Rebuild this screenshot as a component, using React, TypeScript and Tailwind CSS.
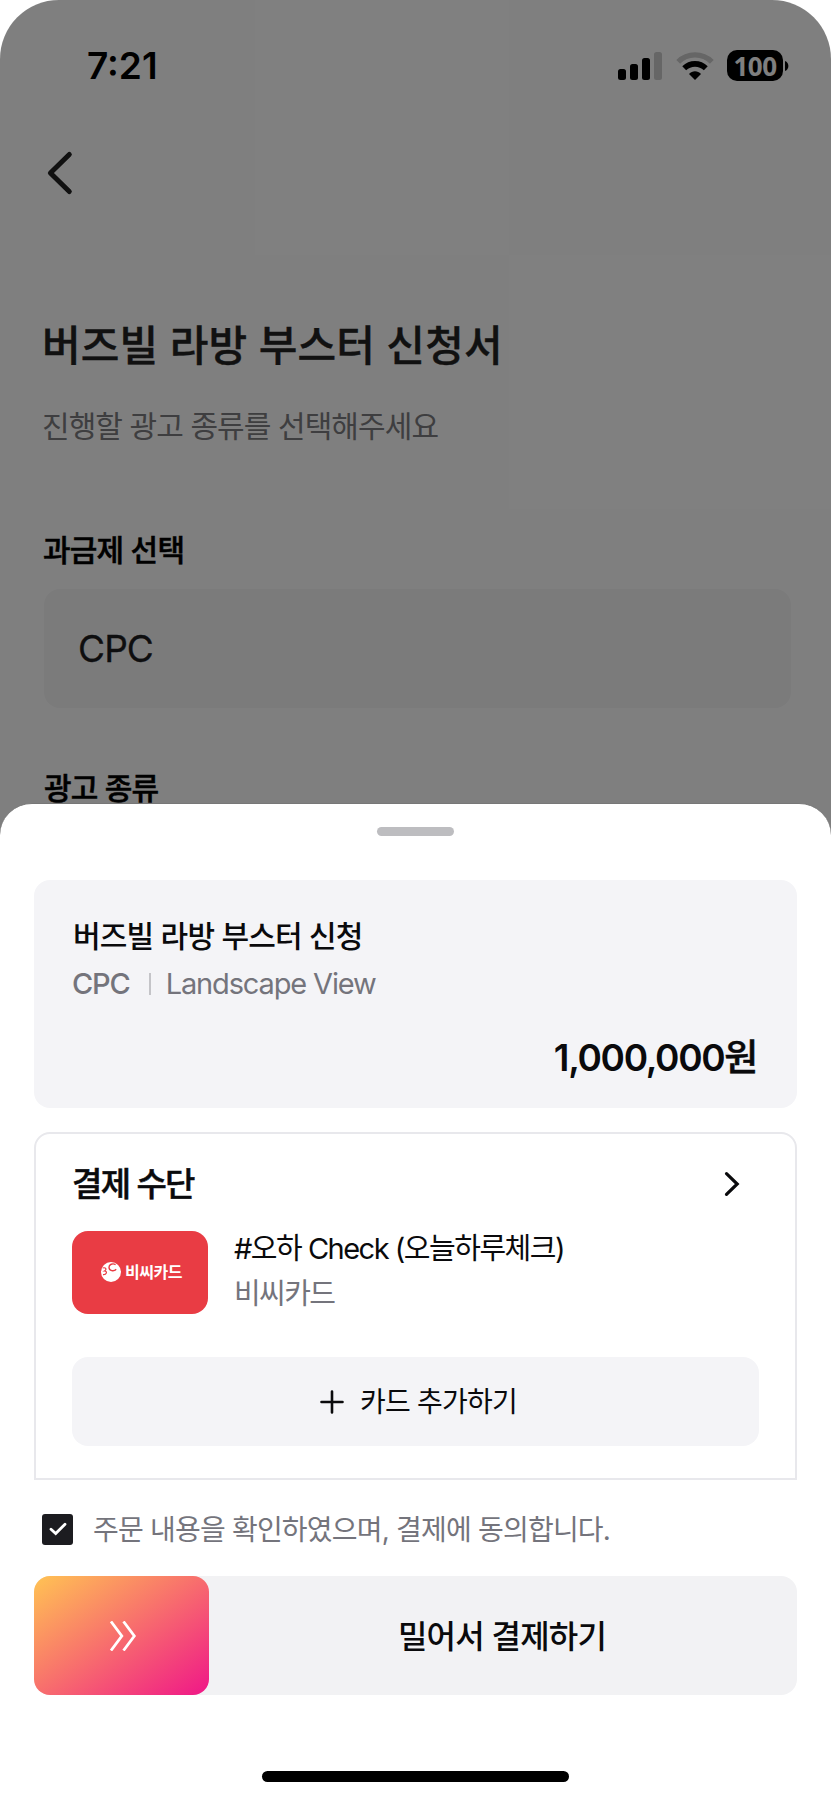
import { useState } from 'react'
import { clsx } from 'clsx'

const order = {
  title: '버즈빌 라방 부스터 신청',
  plan: 'CPC',
  type: 'Landscape View',
  price: 1000000,
}

function StatusBar() {
  return (
    <div className="flex h-[131px] items-center justify-between pl-[87px] pr-[42px]">
      <span className="text-[37px] leading-[40px] font-semibold tracking-[0px] text-black">7:21</span>
      <div className="flex items-center">
        {/* Signal */}
        <svg width="44" height="28" viewBox="0 0 44 28" className="mr-[14px]">
          <rect x="0" y="17" width="8" height="11" rx="2.5" />
          <rect x="12" y="12" width="8" height="16" rx="2.5" />
          <rect x="24" y="6" width="8" height="22" rx="2.5" />
          <rect x="36" y="0" width="8" height="28" rx="2.5" fill="#ccc" />
        </svg>
        {/* Wifi */}
        <svg width="38" height="28" viewBox="0 0 38 28" fill="none" className="mr-[13px]">
          <path d="M2.2 9.8C11.5 0.6 26.5 0.6 35.8 9.8" stroke="#ccc" strokeWidth="5.4" />
          <path d="M8.2 16.2C14.3 10.4 23.7 10.4 29.8 16.2" stroke="#000" strokeWidth="5.6" />
          <path d="M13 22C16.4 18.4 21.6 18.4 25 22L19 28Z" fill="#000" />
        </svg>
        {/* Battery */}
        <div className="flex h-[31px] w-[56px] items-center justify-center rounded-[10px] bg-black font-['Open_Sans',sans-serif] text-[26px] leading-none font-bold tracking-[-0.6px] text-white">
          100
        </div>
        <svg width="4" height="10" viewBox="0 0 4 10" className="ml-[2px]">
          <path d="M0 0C4.5 1.5 4.5 8.5 0 10Z" />
        </svg>
      </div>
    </div>
  )
}

function OrderForm() {
  return (
    <div className="h-[1000px] overflow-hidden rounded-t-[59px] bg-white">
      <StatusBar />
      <button className="ml-[45px] mt-[19px] block">
        <svg width="28" height="46" viewBox="0 0 28 46" fill="none" stroke="#222" strokeWidth="5" strokeLinecap="round" strokeLinejoin="round">
          <path d="M24.3 4.5L5.4 23L24.3 41.5" />
        </svg>
      </button>
      <div className="px-[42px]">
        <h1 className="mt-[124px] text-[42px] leading-[52px] font-medium tracking-[0.15px] text-[#222] [-webkit-text-stroke:0.4px]">
          버즈빌 라방 부스터 신청서
        </h1>
        <p className="mt-[34px] text-[30px] leading-[40px] tracking-[-0.92px] text-[#7c7c80]">
          진행할 광고 종류를 선택해주세요
        </p>
        <p className="mt-[84px] ml-px text-[30px] leading-[40px] font-medium tracking-[-0.8px] text-black [-webkit-text-stroke:0.5px]">
          과금제 선택
        </p>
        <div className="mt-[19px] ml-[2px] mr-[-2px] flex h-[119px] items-center rounded-[16px] bg-[#f6f6f7] pl-[34px] text-[37px] tracking-[-0.9px] text-[#1c1c1e] [-webkit-text-stroke:0.3px]">
          CPC
        </div>
        <p className="mt-[60px] ml-[2px] text-[30px] leading-[40px] font-medium tracking-[-0.8px] text-black [-webkit-text-stroke:0.5px]">
          광고 종류
        </p>
      </div>
    </div>
  )
}

function OrderSummary() {
  return (
    <section className="mt-[44px] h-[228px] rounded-[16px] bg-[#f4f4f7] pt-[36px] pl-[38px] pr-[40px]">
      <h2 className="ml-px text-[30px] leading-[40px] font-medium tracking-[-0.8px] text-[#0a0a0c]">{order.title}</h2>
      <div className="mt-[8px] flex h-[40px] items-center text-[29px] leading-[40px] tracking-[-1.15px] text-[#74747c]">
        <span className="font-medium">{order.plan}</span>
        <span className="ml-[19px] mr-[15px] h-[22px] w-[2px] bg-[#c4c4c8]" />
        <span>{order.type}</span>
      </div>
      <p className="mt-[32px] text-right text-[37px] leading-[44px] font-semibold tracking-[-1.35px] text-[#0a0a0c]">
        {order.price.toLocaleString('en-US')}
        <span className="font-medium [-webkit-text-stroke:0.5px]">원</span>
      </p>
    </section>
  )
}

function CardLogo() {
  return (
    <div className="mt-px flex h-[83px] w-[136px] items-center rounded-[16px] bg-[#e93c44] pb-px pl-[29px]">
      <svg width="20" height="20" viewBox="0 0 20 20" fill="none">
        <circle cx="10" cy="10" r="10" fill="#fff" />
        <path d="M15.2 7.2C13 9.8 8 9 8 5.2C8 2.6 11.5 0.8 14.6 2.6" stroke="#e93c44" strokeWidth="1.4" />
        <path d="M1.6 6C5 5 6 7.6 3.4 9C6.8 9.2 5.6 13 2 12.6" stroke="#e93c44" strokeWidth="1.2" />
      </svg>
      <span className="ml-[4px] text-[16px] leading-none font-bold tracking-[-0.5px] text-white">비씨카드</span>
    </div>
  )
}

function PaymentMethod() {
  return (
    <section className="mt-[24px] h-[348px] rounded-t-[16px] border-2 border-[#e8e8ec] pt-[28px] pl-[36px] pr-[36px]">
      <div className="flex items-center justify-between">
        <h2 className="text-[33px] leading-[44px] font-medium tracking-[-1.7px] text-[#0a0a0c] [-webkit-text-stroke:0.5px]">결제 수단</h2>
        <svg width="18" height="26" viewBox="0 0 18 26" fill="none" stroke="#0a0a0c" strokeWidth="3.2" strokeLinecap="round" className="mr-[18px]">
          <path d="M3.5 2.7L14.2 13L3.5 23.3" />
        </svg>
      </div>
      <div className="mt-[24px] flex">
        <CardLogo />
        <div className="ml-[26px]">
          <p className="mt-[-1px] text-[29px] leading-[40px] tracking-[-1.5px] text-[#0a0a0c]">#오하 Check (오늘하루체크)</p>
          <p className="mt-[5px] text-[29px] leading-[40px] tracking-[-1.6px] text-[#74747c]">비씨카드</p>
        </div>
      </div>
      <button className="mt-[43px] flex h-[89px] w-full items-center justify-center rounded-[16px] bg-[#f4f4f7] pt-px pl-[6px] text-[28px] tracking-[-0.8px] text-[#0a0a0c]">
        <svg width="24" height="24" viewBox="0 0 24 24" stroke="#0a0a0c" strokeWidth="2.6" strokeLinecap="round" className="mr-[16px]">
          <path d="M12 1.5V22.5M1.5 12H22.5" />
        </svg>
        카드 추가하기
      </button>
    </section>
  )
}

function PaymentSheet() {
  const [agreed, setAgreed] = useState(true)

  return (
    <div className="absolute inset-x-0 top-[803px] h-[997px] rounded-t-[32px] border-t border-[#777] bg-white px-[34px]">
      <div className="mx-auto mt-[23px] h-[9px] w-[77px] rounded-full bg-[#bdbdc0]" />
      <OrderSummary />
      <PaymentMethod />

      {/* Agreement */}
      <button onClick={() => setAgreed(!agreed)} className="mt-[29px] ml-[8px] flex h-[40px] items-center">
        <span className={clsx('flex size-[31px] items-center justify-center rounded-[3px]', agreed ? 'bg-[#1c1c20]' : 'bg-[#c4c4c8]')}>
          <svg width="18" height="14" viewBox="0 0 18 14" fill="none" stroke="#fff" strokeWidth="2.8" strokeLinecap="round">
            <path d="M2 7.2L6.7 11.6L16 2.2" />
          </svg>
        </span>
        <span className="mt-px ml-[20px] text-[28px] leading-[40px] tracking-[-0.8px] text-[#74747c]">
          주문 내용을 확인하였으며, 결제에 동의합니다.
        </span>
      </button>

      {/* Slide to pay */}
      <div className="mt-[27px] flex h-[119px] rounded-[16px] bg-[#f2f2f4]">
        <div className="flex w-[175px] items-center justify-center rounded-[16px] bg-[linear-gradient(145deg,#ffbe55_3%,#f01c86_97%)]">
          <svg width="28" height="30" viewBox="0 0 28 30" fill="none" stroke="#fff" strokeWidth="2.8" className="ml-[2px]">
            <path d="M2 0.5L12.8 15L2 29.5M14.5 0.5L25.3 15L14.5 29.5" />
          </svg>
        </div>
        <span className="flex flex-1 items-center justify-center pt-[2px] pr-[2px] text-[32px] font-medium tracking-[-0.8px] text-[#0a0a0c]">
          밀어서 결제하기
        </span>
      </div>

      <div className="mx-auto mt-[76px] h-[11px] w-[307px] rounded-full bg-black" />
    </div>
  )
}

export default function App() {
  return (
    <div className="relative h-[1800px] w-[831px] overflow-hidden bg-white font-['Inter','Noto_Sans_CJK_KR',sans-serif]">
      <OrderForm />
      <div className="absolute inset-x-0 top-0 h-[900px] rounded-t-[59px] bg-black/50" />
      <PaymentSheet />
    </div>
  )
}
